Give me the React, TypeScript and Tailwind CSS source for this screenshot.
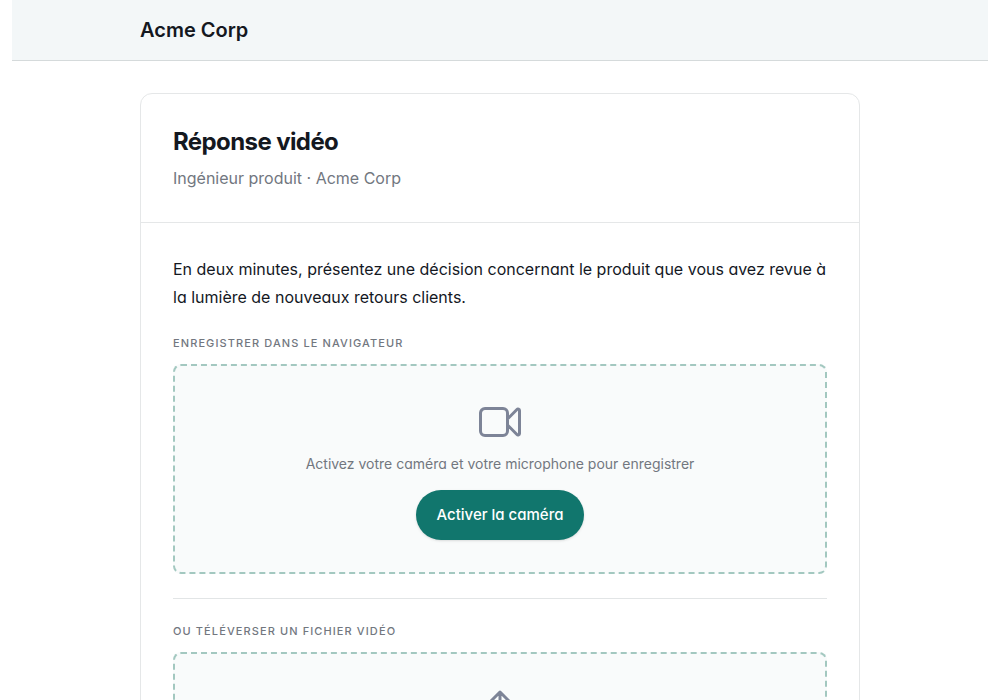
import type { ReactNode } from 'react';

function VideoIcon() {
  return (
    <svg className="h-12 w-12 text-[#7d8497]" fill="none" viewBox="0 0 24 24" stroke="currentColor" strokeWidth={1.5} aria-hidden="true">
      <path
        strokeLinecap="round"
        strokeLinejoin="round"
        d="M15.75 10.5l4.72-4.72a.75.75 0 011.28.53v11.38a.75.75 0 01-1.28.53l-4.72-4.72M4.5 18.75h9a2.25 2.25 0 002.25-2.25v-9a2.25 2.25 0 00-2.25-2.25h-9A2.25 2.25 0 002.25 7.5v9a2.25 2.25 0 002.25 2.25z"
      />
    </svg>
  );
}

function UploadIcon() {
  return (
    <svg className="h-12 w-12 text-[#7d8497]" fill="none" viewBox="0 0 24 24" stroke="currentColor" strokeWidth={1.5} aria-hidden="true">
      <path
        strokeLinecap="round"
        strokeLinejoin="round"
        d="M3 16.5v2.25A2.25 2.25 0 005.25 21h13.5A2.25 2.25 0 0021 18.75V16.5m-13.5-9L12 3m0 0l4.5 4.5M12 3v13.5"
      />
    </svg>
  );
}

function SectionLabel({ children }: { children: ReactNode }) {
  return (
    <h2 className="mb-3 text-[11px] leading-[17px] font-medium tracking-widest text-[#72777f] uppercase">{children}</h2>
  );
}

function DropArea({ children }: { children: ReactNode }) {
  return (
    <div className="flex flex-col items-center rounded-lg border-2 border-dashed border-[#a3c8c0] bg-[#f9fbfb] p-8 text-center">
      {children}
    </div>
  );
}

export default function App() {
  return (
    <div className="h-screen overflow-hidden bg-white px-3 font-['Inter',sans-serif] text-[#14181f] [font-feature-settings:'cv11']">
      <header className="border-b border-[#d5dadb] bg-[#f3f7f8]">
        <div className="mx-auto max-w-[720px] py-4">
          <p className="text-xl leading-7 font-semibold">Acme Corp</p>
        </div>
      </header>

      <main className="mx-auto mt-8 max-w-[720px] rounded-xl border border-[#e5e7e8] bg-white">
        <div className="border-b border-[#e5e7e8] p-8">
          <h1 className="text-2xl leading-8 font-bold tracking-tight">Réponse vidéo</h1>
          <p className="mt-2 text-base leading-6 text-[#72777f]">Ingénieur produit · Acme Corp</p>
        </div>

        <div className="p-8">
          <p className="mb-6 text-base leading-7">
            En deux minutes, présentez une décision concernant le produit que vous avez revue à la lumière de nouveaux
            retours clients.
          </p>

          <section className="border-b border-[#e2e5e6] pb-6">
            <SectionLabel>Enregistrer dans le navigateur</SectionLabel>
            <DropArea>
              <VideoIcon />
              <p className="mt-2 mb-4 text-sm leading-5 text-[#72777f]">
                Activez votre caméra et votre microphone pour enregistrer
              </p>
              <button type="button" className="rounded-full bg-[#11766d] px-[21px] py-[13px] text-[15px] leading-6 font-medium text-white shadow-sm">
                Activer la caméra
              </button>
            </DropArea>
          </section>

          <section className="pt-6">
            <SectionLabel>Ou téléverser un fichier vidéo</SectionLabel>
            <DropArea>
              <UploadIcon />
            </DropArea>
          </section>
        </div>
      </main>
    </div>
  );
}
